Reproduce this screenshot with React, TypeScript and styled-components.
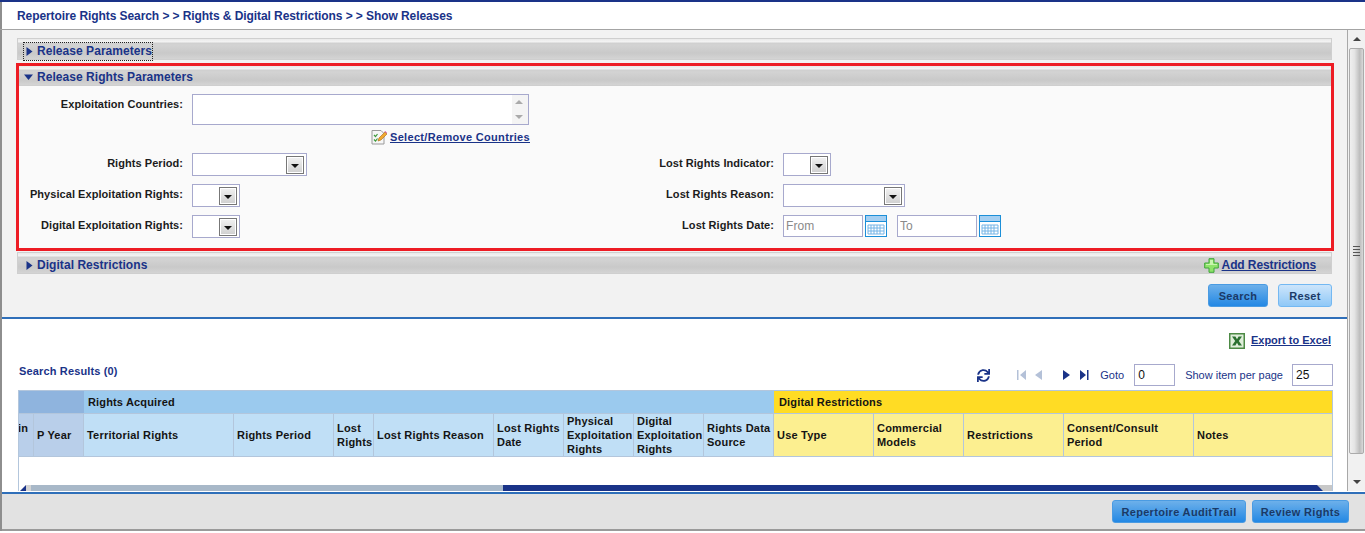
import styled, { createGlobalStyle } from "styled-components";
import { FaSync } from "react-icons/fa";

const navy = "#1a3388";
const font = `"Liberation Sans", Arial, sans-serif`;

const GlobalStyle = createGlobalStyle`
  html, body {
    margin: 0;
    padding: 0;
    background: #fff;
    overflow: hidden;
  }
  * {
    box-sizing: border-box;
  }
`;

const Shell = styled.div`
  width: 1365px;
  height: 531px;
  display: flex;
  flex-direction: column;
  border-left: 2px solid #8e8e8e;
  font-family: ${font};
  font-size: 11px;
  font-weight: 700;
  letter-spacing: 0.32px;
`;

const Breadcrumb = styled.div`
  height: 30px;
  flex: none;
  display: flex;
  align-items: center;
  margin-left: -2px;
  padding-left: 17px;
  border-top: 2px solid ${navy};
  border-bottom: 1px solid #a4a4a4;
  color: ${navy};
  font-size: 12px;
  letter-spacing: -0.08px;
  position: relative;
`;

const Main = styled.div`
  height: 462px;
  flex: none;
  display: flex;
`;

const Content = styled.div`
  flex: 1;
  min-width: 0;
  display: flex;
  flex-direction: column;
`;

const SearchArea = styled.div`
  height: 289px;
  flex: none;
  padding: 8px 15px 0 15px;
  background: #f2f2f2;
  border-bottom: 2px solid #2f6fb9;
`;

const PanelHead = styled.div<{ $tight?: boolean }>`
  height: ${(p) => (p.$tight ? "20px" : "22px")};
  display: flex;
  align-items: center;
  justify-content: space-between;
  padding: ${(p) => (p.$tight ? "3px 0 0 6px" : "4px 0 0 6px")};
  color: ${navy};
  font-size: 12px;
  letter-spacing: 0.05px;
  border: solid #cfcfcf;
  border-width: ${(p) => (p.$tight ? "0 0 1px 0" : "1px")};
  background: linear-gradient(
    to bottom,
    #e9e9e9 0,
    #f4f4f4 3px,
    #cfcfcf 4px,
    #d3d3d3 6px,
    #c9c9c9 14px,
    #d4d4d4 100%
  );
`;

const DigitalHead = styled(PanelHead)`
  margin-top: 1px;
`;

const HeadTitle = styled.span<{ $focused?: boolean }>`
  display: inline-flex;
  align-items: center;
  gap: 3px;
  height: 17px;
  padding-left: 1px;
  outline: ${(p) => (p.$focused ? "1px dotted #222" : "none")};
`;

const HeadIcon = styled.svg<{ $open?: boolean }>`
  display: block;
  width: 9px;
  height: 9px;
  fill: ${navy};
  margin-left: ${(p) => (p.$open ? "-2px" : "0")};
  margin-right: ${(p) => (p.$open ? "1px" : "0")};
`;

const RedBox = styled.div`
  height: 188px;
  margin: 3px -2px 0 -1px;
  border: 3px solid #ed1c24;
  background: #fafafa;
`;

const Countries = styled.div`
  padding: 8px 0 0 173px;
  display: flex;
  flex-direction: column;
  width: 511px;
`;

const FormLabel = styled.label`
  display: block;
  color: #1c1c1c;
  text-align: right;
  line-height: 16px;
  letter-spacing: 0.05px;
  white-space: nowrap;
`;

const CountriesRow = styled.div`
  display: flex;
  gap: 9px;
  margin-left: -173px;
`;

const CountriesLabel = styled(FormLabel)`
  width: 164px;
  flex: none;
  padding-top: 2px;
`;

const ListBox = styled.div`
  width: 337px;
  height: 31px;
  flex: none;
  display: flex;
  flex-direction: column;
  align-items: flex-end;
  justify-content: space-between;
  padding: 5px 5px 5px 0;
  background: #fff;
  border: 1px solid #a7a9cd;
  box-shadow: inset -16px 0 0 #f4f4f4;
`;

const ScrollArrow = styled.span<{ $dir: "up" | "down"; $color?: string }>`
  display: block;
  width: 0;
  height: 0;
  border-left: 4px solid transparent;
  border-right: 4px solid transparent;
  ${(p) =>
    p.$dir === "up"
      ? `border-bottom: 4px solid ${p.$color ?? "#aaa"};`
      : `border-top: 4px solid ${p.$color ?? "#aaa"};`}
`;

const SelectLine = styled.div`
  display: flex;
  align-items: center;
  justify-content: flex-end;
  gap: 3px;
  height: 18px;
  margin-top: 3px;
`;

const TextLink = styled.a`
  color: ${navy};
  text-decoration: underline;
  white-space: nowrap;
`;

const FormGrid = styled.div`
  display: grid;
  grid-template-columns: 164px 400px 173px auto;
  column-gap: 9px;
  row-gap: 8px;
  margin-top: 7px;
  justify-items: start;
  align-items: start;
`;

const GridLabel = styled(FormLabel)`
  width: 100%;
  padding-top: 2px;
`;

const Select = styled.div<{ $w: number }>`
  width: ${(p) => p.$w}px;
  height: 23px;
  display: flex;
  justify-content: flex-end;
  align-items: center;
  padding-right: 2px;
  background: #fff;
  border: 1px solid #a7a9cd;
`;

const SelectButton = styled.span`
  width: 18px;
  height: 18px;
  display: flex;
  align-items: center;
  justify-content: center;
  padding-top: 3px;
  border: 1px solid #777;
  background: linear-gradient(to bottom, #f2f2f2, #cfcfcf);
  box-shadow: inset 0 0 0 1px #fff;
`;

const DateRange = styled.div`
  display: flex;
  align-items: center;
`;

const DateField = styled.input`
  width: 80px;
  height: 22px;
  padding: 0 2px;
  background: #fff;
  border: 1px solid #a7a9cd;
  font: 400 12px ${font};
  letter-spacing: 0.1px;
  &::placeholder {
    color: #8a8a8a;
    opacity: 1;
  }
`;

const CalIcon = styled.svg`
  display: block;
  width: 22px;
  height: 22px;
  margin-left: 2px;
`;

const DateGap = styled.span`
  width: 10px;
`;

const AddLink = styled.span`
  display: inline-flex;
  align-items: center;
  gap: 3px;
  padding-right: 15px;
  letter-spacing: -0.1px;
`;

const Actions = styled.div`
  display: flex;
  justify-content: flex-end;
  gap: 10px;
  margin-top: 10px;
`;

const Button = styled.button<{ $variant?: "primary" | "light"; $w: number }>`
  width: ${(p) => p.$w}px;
  height: 23px;
  padding: 0;
  white-space: nowrap;
  border-radius: 3px;
  border: 1px solid ${(p) => (p.$variant === "light" ? "#73b8f2" : "#4a9be2")};
  background: ${(p) =>
    p.$variant === "light"
      ? "linear-gradient(to bottom, #cde5fb, #8fc8f7)"
      : "linear-gradient(to bottom, #6db0ea, #2388e4)"};
  color: #1b3a66;
  font: 700 11px ${font};
  letter-spacing: 0.32px;
`;

const Results = styled.div`
  flex: 1;
  min-height: 0;
  display: flex;
  flex-direction: column;
  padding: 14px 14px 1px 16px;
  background: #fff;
`;

const ExportRow = styled.div`
  display: flex;
  justify-content: flex-end;
  align-items: center;
  gap: 6px;
  height: 16px;
  padding-right: 2px;
  letter-spacing: 0;
`;

const ExportLink = styled(TextLink)`
  margin-top: -2px;
`;

const Toolbar = styled.div`
  display: flex;
  justify-content: space-between;
  height: 22px;
  margin-top: 15px;
  flex: none;
`;

const ResultsTitle = styled.div`
  color: ${navy};
  padding: 0 0 0 1px;
  line-height: 14px;
  letter-spacing: 0.15px;
`;

const Pager = styled.div`
  display: flex;
  align-items: center;
  color: ${navy};
  font-weight: 400;
  letter-spacing: 0;
`;

const PagerSpacer = styled.span<{ $w: number }>`
  width: ${(p) => p.$w}px;
  flex: none;
`;

const PagerIcon = styled.svg<{ $off?: boolean }>`
  display: block;
  width: 10px;
  height: 12px;
  flex: none;
  fill: ${(p) => (p.$off ? "#b4c1d8" : navy)};
`;

const PagerInput = styled.input`
  width: 41px;
  height: 22px;
  padding: 0 3px;
  border: 1px solid #a7a9cd;
  background: #fff;
  color: #111;
  font: 400 12px ${font};
`;

const Table = styled.div`
  margin-top: 4px;
  flex: 1;
  min-height: 0;
  display: flex;
  flex-direction: column;
  border: solid #b3c6dc;
  border-width: 1px 1px 0 1px;
`;

const HeaderGrid = styled.div`
  display: grid;
  grid-template-columns: 15px 50px 150px 100px 40px 120px 70px 70px 70px 70px 100px 90px 100px 130px 138px;
  grid-template-rows: 23px 43px;
  flex: none;
`;

const tones = {
  slate: { group: "#8fb4de", head: "#b9cfea" },
  blue: { group: "#9bcaee", head: "#c0dff6" },
  yellow: { group: "#ffdc24", head: "#fcef90" },
};

type Tone = keyof typeof tones;

const GroupCell = styled.div<{ $tone: Tone; $span: number }>`
  grid-column: span ${(p) => p.$span};
  display: flex;
  align-items: center;
  padding: 0 0 0 ${(p) => (p.$tone === "yellow" ? "5px" : "4px")};
  background: ${(p) => tones[p.$tone].group};
  border-bottom: 1px solid #b3c6dc;
  color: #141414;
  letter-spacing: 0.15px;
`;

const HeadCell = styled.div<{ $tone: Tone }>`
  display: flex;
  align-items: center;
  padding: 0 1px 0 3px;
  background: ${(p) => tones[p.$tone].head};
  border-right: 1px solid #b3c6dc;
  border-bottom: 1px solid #b3c6dc;
  color: #141414;
  line-height: 14px;
  letter-spacing: 0.2px;
  overflow: hidden;
  &:last-child {
    border-right: 0;
  }
`;

// the first visible column is scrolled, only the tail of its title shows
const ClippedHeadCell = styled(HeadCell)`
  padding: 0 0 14px 0;
  text-indent: -1px;
`;

const TableBody = styled.div`
  flex: 1;
  background: #fff;
`;

const HScroll = styled.div`
  height: 6px;
  flex: none;
  display: flex;
`;

const HArrow = styled.span<{ $w: number; $bg: string }>`
  width: ${(p) => p.$w}px;
  flex: none;
  background: ${(p) => p.$bg};
`;

const HCorner = styled.svg<{ $bg: string }>`
  display: block;
  width: 6px;
  height: 6px;
  flex: none;
  fill: ${navy};
  background: ${(p) => p.$bg};
`;

const HTrack = styled.span`
  background: #a8b8c8;
  width: 472px;
  flex: none;
`;

const HThumb = styled.span`
  flex: 1;
  background: ${navy};
`;

const VScroll = styled.div`
  width: 18px;
  flex: none;
  height: 461px;
  display: flex;
  flex-direction: column;
  align-items: center;
  background: #f1f1f1;
  border-left: 1px solid #a8a8a8;
`;

const VArrowBox = styled.div<{ $h: number; $end?: boolean }>`
  height: ${(p) => p.$h}px;
  flex: none;
  display: flex;
  justify-content: center;
  align-items: ${(p) => (p.$end ? "flex-end" : "center")};
  padding-bottom: ${(p) => (p.$end ? "7px" : "0")};
`;

const VThumb = styled.div`
  width: 15px;
  margin-left: -1px;
  height: 406px;
  flex: none;
  display: flex;
  flex-direction: column;
  align-items: center;
  justify-content: center;
  gap: 2px;
  border: 1px solid #ababab;
  border-radius: 2px;
  background: linear-gradient(to right, #f0f0f0, #e4e4e4 35%, #bdbdbd 75%, #d9d9d9);
`;

const Grip = styled.span`
  width: 7px;
  height: 1px;
  background: #555;
`;

const Footer = styled.div`
  height: 37px;
  flex: none;
  display: flex;
  justify-content: flex-end;
  gap: 6px;
  padding: 6px 16px 0 0;
  background: #e2e2e2;
  border-top: 2px solid #2f6fb9;
`;

const BottomLine = styled.div`
  height: 2px;
  flex: none;
  background: #9a9a9a;
`;

const Arrow = ({ open }: { open?: boolean }) => (
  <HeadIcon viewBox="0 0 9 9" $open={open}>
    {open ? <path d="M0 1.5h9L4.5 7z" /> : <path d="M1.5 0l6 4.5-6 4.5z" />}
  </HeadIcon>
);

const Calendar = () => (
  <CalIcon viewBox="0 0 22 22">
    <rect x="0.5" y="0.5" width="21" height="21" fill="#fff" stroke="#1c8fd8" />
    <rect x="1" y="1" width="20" height="5" fill="#a4cff2" />
    <rect x="1" y="6" width="20" height="1" fill="#1c8fd8" />
    <path
      d="M3 10h16M3 13h16M3 16h16M3 19h16M3 10v9M6 10v9M9 10v9M12 10v9M15 10v9M19 10v9"
      stroke="#74b4e6"
      strokeWidth="1"
      fill="none"
    />
  </CalIcon>
);

const Notepad = () => (
  <svg width="16" height="16" viewBox="0 0 16 16">
    <path d="M1 1.5h9l3 3V15H1z" fill="#f6f6f6" stroke="#9a9a9a" />
    <path d="M3 6l1.5 1.5L6.5 5M3 10.5L4.5 12l2-2.5" stroke="#3c9a3c" strokeWidth="1.2" fill="none" />
    <path d="M7 12l1-3 6-6 2 2-6 6z" fill="#f0a830" stroke="#a86a10" strokeWidth="0.6" />
    <path d="M13.4 2.6l2 2 .6-.8-1.8-1.8z" fill="#d45a9a" />
  </svg>
);

const PlusIcon = () => (
  <svg width="15" height="15" viewBox="0 0 15 15">
    <path
      d="M5 .7h5v4.3h4.3v5H10v4.3H5V10H.7V5H5z"
      fill="#8ee36a"
      stroke="#3fa53a"
      strokeLinejoin="round"
    />
    <path d="M6 2h3v4H6zM2 6h11v1H2z" fill="#c8f5ae" />
  </svg>
);

const ExcelIcon = () => (
  <svg width="16" height="16" viewBox="0 0 16 16">
    <rect width="16" height="16" fill="#4d8a45" />
    <rect x="1.5" y="1.5" width="13" height="13" fill="#dfeeda" />
    <path d="M3 3.5h3.4L8 6.3l1.6-2.8H13L9.8 8l3.2 4.5H9.6L8 9.7l-1.6 2.8H3L6.2 8z" fill="#2b7030" />
  </svg>
);

const columns: { label: string; tone: Tone }[] = [
  { label: "P Year", tone: "slate" },
  { label: "Territorial Rights", tone: "blue" },
  { label: "Rights Period", tone: "blue" },
  { label: "Lost Rights", tone: "blue" },
  { label: "Lost Rights Reason", tone: "blue" },
  { label: "Lost Rights Date", tone: "blue" },
  { label: "Physical Exploitation Rights", tone: "blue" },
  { label: "Digital Exploitation Rights", tone: "blue" },
  { label: "Rights Data Source", tone: "blue" },
  { label: "Use Type", tone: "yellow" },
  { label: "Commercial Models", tone: "yellow" },
  { label: "Restrictions", tone: "yellow" },
  { label: "Consent/Consult Period", tone: "yellow" },
  { label: "Notes", tone: "yellow" },
];

const Drop = ({ w }: { w: number }) => (
  <Select $w={w}>
    <SelectButton>
      <ScrollArrow $dir="down" $color="#111" />
    </SelectButton>
  </Select>
);

export default function App() {
  return (
    <>
      <GlobalStyle />
      <Shell>
        <Breadcrumb>Repertoire Rights Search &gt; &gt; Rights &amp; Digital Restrictions &gt; &gt; Show Releases</Breadcrumb>
        <Main>
          <Content>
            <SearchArea>
              <PanelHead>
                <HeadTitle $focused>
                  <Arrow />
                  Release Parameters
                </HeadTitle>
              </PanelHead>
              <RedBox>
                <PanelHead $tight>
                  <HeadTitle>
                    <Arrow open />
                    Release Rights Parameters
                  </HeadTitle>
                </PanelHead>
                <Countries>
                  <CountriesRow>
                    <CountriesLabel>Exploitation Countries:</CountriesLabel>
                    <ListBox>
                      <ScrollArrow $dir="up" />
                      <ScrollArrow $dir="down" />
                    </ListBox>
                  </CountriesRow>
                  <SelectLine>
                    <Notepad />
                    <TextLink>Select/Remove Countries</TextLink>
                  </SelectLine>
                </Countries>
                <FormGrid>
                  <GridLabel>Rights Period:</GridLabel>
                  <Drop w={115} />
                  <GridLabel>Lost Rights Indicator:</GridLabel>
                  <Drop w={48} />
                  <GridLabel>Physical Exploitation Rights:</GridLabel>
                  <Drop w={48} />
                  <GridLabel>Lost Rights Reason:</GridLabel>
                  <Drop w={122} />
                  <GridLabel>Digital Exploitation Rights:</GridLabel>
                  <Drop w={48} />
                  <GridLabel>Lost Rights Date:</GridLabel>
                  <DateRange>
                    <DateField placeholder="From" readOnly />
                    <Calendar />
                    <DateGap />
                    <DateField placeholder="To" readOnly />
                    <Calendar />
                  </DateRange>
                </FormGrid>
              </RedBox>
              <DigitalHead>
                <HeadTitle>
                  <Arrow />
                  Digital Restrictions
                </HeadTitle>
                <AddLink>
                  <PlusIcon />
                  <TextLink>Add Restrictions</TextLink>
                </AddLink>
              </DigitalHead>
              <Actions>
                <Button $variant="primary" $w={60}>Search</Button>
                <Button $variant="light" $w={54}>Reset</Button>
              </Actions>
            </SearchArea>
            <Results>
              <ExportRow>
                <ExcelIcon />
                <ExportLink>Export to Excel</ExportLink>
              </ExportRow>
              <Toolbar>
                <ResultsTitle>Search Results (0)</ResultsTitle>
                <Pager>
                  <FaSync size={13} color={navy} />
                  <PagerSpacer $w={27} />
                  <PagerIcon $off viewBox="0 0 10 12">
                    <path d="M0 1h1.5v10H0zM9 1v10L3 6z" />
                  </PagerIcon>
                  <PagerSpacer $w={7} />
                  <PagerIcon $off viewBox="0 0 10 12">
                    <path d="M8 1v10L1 6z" />
                  </PagerIcon>
                  <PagerSpacer $w={17} />
                  <PagerIcon viewBox="0 0 10 12">
                    <path d="M2 1v10l7-5z" />
                  </PagerIcon>
                  <PagerSpacer $w={8} />
                  <PagerIcon viewBox="0 0 10 12">
                    <path d="M1 1v10l6-5zM8 1h1.5v10H8z" />
                  </PagerIcon>
                  <PagerSpacer $w={11} />
                  Goto
                  <PagerSpacer $w={10} />
                  <PagerInput defaultValue="0" readOnly />
                  <PagerSpacer $w={10} />
                  Show item per page
                  <PagerSpacer $w={9} />
                  <PagerInput defaultValue="25" readOnly />
                </Pager>
              </Toolbar>
              <Table>
                <HeaderGrid>
                  <GroupCell $tone="slate" $span={2} />
                  <GroupCell $tone="blue" $span={8}>Rights Acquired</GroupCell>
                  <GroupCell $tone="yellow" $span={5}>Digital Restrictions</GroupCell>
                  <ClippedHeadCell $tone="slate">in</ClippedHeadCell>
                  {columns.map((c) => (
                    <HeadCell key={c.label} $tone={c.tone}>
                      {c.label}
                    </HeadCell>
                  ))}
                </HeaderGrid>
                <TableBody />
                <HScroll>
                  <HArrow $w={1} $bg="#fff" />
                  <HCorner viewBox="0 0 6 6" $bg="#fff">
                    <path d="M6 0v6H0z" />
                  </HCorner>
                  <HArrow $w={5} $bg="#d4d4d4" />
                  <HTrack />
                  <HThumb />
                  <HCorner viewBox="0 0 6 6" $bg="#c8c8c8">
                    <path d="M0 0l6 6H0z" />
                  </HCorner>
                  <HArrow $w={9} $bg="#c8c8c8" />
                </HScroll>
              </Table>
            </Results>
          </Content>
          <VScroll>
            <VArrowBox $h={18}>
              <ScrollArrow $dir="up" $color="#444" />
            </VArrowBox>
            <VThumb>
              <Grip />
              <Grip />
              <Grip />
              <Grip />
            </VThumb>
            <VArrowBox $h={37} $end>
              <ScrollArrow $dir="down" $color="#444" />
            </VArrowBox>
          </VScroll>
        </Main>
        <Footer>
          <Button $variant="primary" $w={134}>Repertoire AuditTrail</Button>
          <Button $variant="primary" $w={97}>Review Rights</Button>
        </Footer>
        <BottomLine />
      </Shell>
    </>
  );
}
